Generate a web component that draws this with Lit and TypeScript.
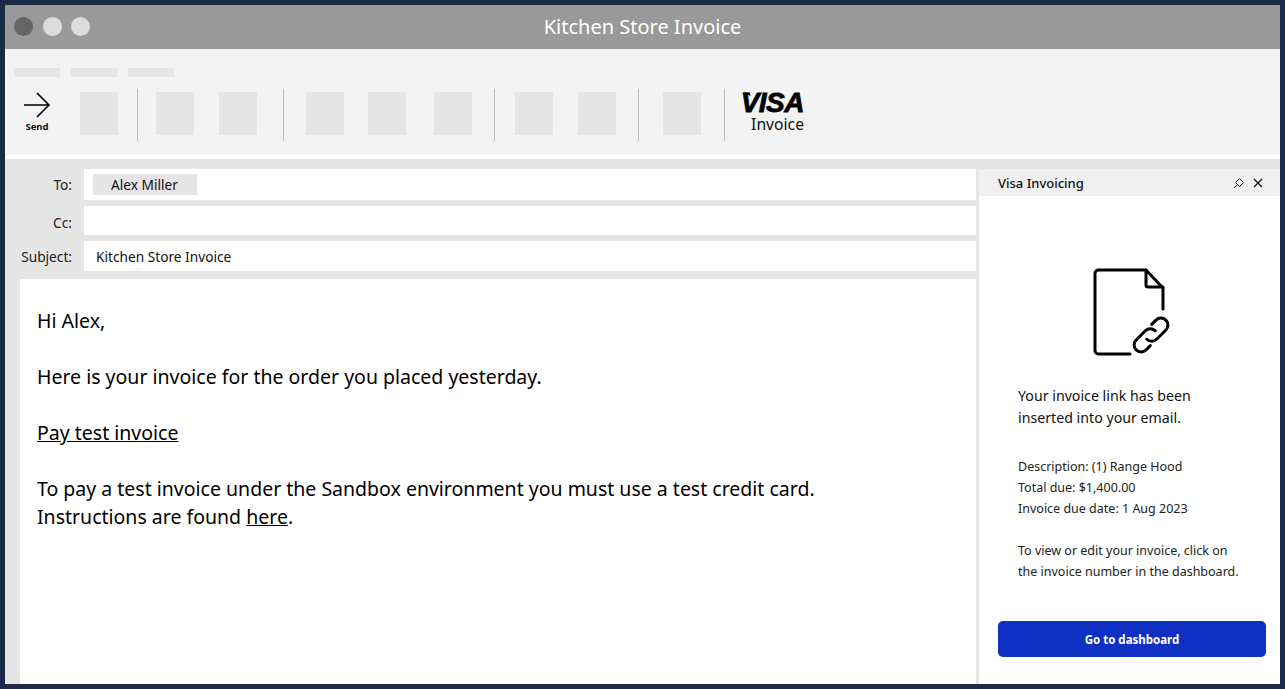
import {LitElement, css, html, svg} from 'lit';
import {customElement} from 'lit/decorators.js';

// left margin of each toolbar item, measured from the previous one
const TOOLBAR = [
  {kind: 'block', gap: 20},
  {kind: 'sep', gap: 19},
  {kind: 'block', gap: 18},
  {kind: 'block', gap: 25},
  {kind: 'sep', gap: 26},
  {kind: 'block', gap: 22},
  {kind: 'block', gap: 24},
  {kind: 'block', gap: 28},
  {kind: 'sep', gap: 22},
  {kind: 'block', gap: 20},
  {kind: 'block', gap: 25},
  {kind: 'sep', gap: 22},
  {kind: 'block', gap: 24},
  {kind: 'sep', gap: 23},
];

const docIcon = svg`
  <path d="M37 86H5.500a3.500 3.500 0 0 1-3.500-3.500V5.500A3.500 3.500 0 0 1 5.500 2H53l17 18v21" />
  <path d="M53 2v15a2 2 0 0 0 2 2h15" />
  <g transform="translate(58 67) rotate(-45)">
    <path d="M-8 7H-14a7 7 0 0 1 0-14H-1a7 7 0 0 1 7 7" />
    <path d="M8 -7H14a7 7 0 0 1 0 14H1a7 7 0 0 1-7-7" />
  </g>
`;

@customElement('app-root')
export class AppRoot extends LitElement {
  static override styles = css`
    :host {
      display: block;
      width: 1285px;
      height: 689px;
      box-sizing: border-box;
      padding: 5px;
      background: #1d2a47;
      font-family: 'Noto Sans', 'Open Sans', sans-serif;
      color: #111;
      overflow: hidden;
    }

    .window {
      display: flex;
      flex-direction: column;
      height: 100%;
      background: #fff;
    }

    .titlebar {
      position: relative;
      flex: none;
      display: flex;
      align-items: center;
      justify-content: center;
      box-sizing: border-box;
      height: 44px;
      padding-bottom: 2px;
      background: #999;
      color: #fff;
      font-size: 20px;
    }

    .lights {
      position: absolute;
      left: 9px;
      top: 12px;
      display: flex;
      gap: 9.5px;
    }

    .lights span {
      width: 19px;
      height: 19px;
      border-radius: 50%;
      background: #dcdcdc;
    }

    .lights span:first-child {
      background: #666;
    }

    .toolbar {
      flex: none;
      box-sizing: border-box;
      height: 106px;
      padding: 19px 0 0 9px;
      background: #f3f3f3;
    }

    .tabs {
      display: flex;
      gap: 11px;
    }

    .tabs span {
      width: 46px;
      height: 9px;
      background: #e5e5e5;
    }

    .tools {
      display: flex;
      align-items: flex-start;
      margin-top: 12px;
    }

    .send {
      display: flex;
      flex-direction: column;
      align-items: center;
      width: 46px;
      font-size: 9.5px;
      font-weight: 700;
      line-height: 12px;
    }

    .send svg {
      display: block;
      margin: 3px 0 3px;
    }

    .block {
      flex: none;
      width: 38px;
      height: 43px;
      margin-top: 3px;
      background: #e5e5e5;
    }

    .sep {
      flex: none;
      width: 1px;
      height: 52px;
      background: #bdbdbd;
    }

    .visa {
      display: flex;
      flex-direction: column;
      align-items: flex-end;
      margin-left: 17px;
    }

    .visa svg {
      display: block;
      overflow: visible;
    }

    .visa text {
      font-family: 'Liberation Sans', sans-serif;
      font-size: 28px;
      font-style: italic;
      font-weight: 700;
      letter-spacing: -0.5px;
      stroke: #000;
      stroke-width: 0.8;
    }

    .visa span {
      margin-top: 1px;
      font-size: 15.7px;
      line-height: 20px;
    }

    .content {
      flex: 1;
      display: flex;
      min-height: 0;
      margin-top: 4px;
      padding-left: 1px;
      background: #e5e5e5;
    }

    .composer {
      flex: none;
      display: flex;
      flex-direction: column;
      width: 970px;
      margin-right: 3px;
      padding-top: 10px;
      box-sizing: border-box;
    }

    .field {
      display: flex;
      margin-bottom: 6px;
      font-size: 13.7px;
    }

    .field label {
      flex: none;
      width: 66px;
      box-sizing: border-box;
      text-align: right;
      align-self: center;
      color: #222;
    }

    .field .value {
      flex: none;
      display: flex;
      align-items: center;
      box-sizing: border-box;
      width: 892px;
      height: 30px;
      margin-left: 12px;
      padding-left: 12px;
      background: #fff;
    }

    .field.to .value {
      height: 31px;
    }

    .field.cc .value {
      height: 29px;
    }

    .field.cc label {
      padding-top: 4px;
    }

    .chip {
      display: flex;
      align-items: center;
      box-sizing: border-box;
      width: 104px;
      height: 21px;
      margin-left: -3px;
      padding-left: 18px;
      background: #e5e5e5;
    }

    .message {
      flex: 1;
      margin: 2px 0 0 14px;
      padding: 28px 17px 0;
      background: #fff;
      font-size: 19.5px;
      line-height: 28px;
      color: #000;
    }

    .message p {
      margin: 0 0 28px;
    }

    .message a {
      color: inherit;
      text-decoration: underline;
    }

    .panel {
      flex: 1;
      display: flex;
      flex-direction: column;
      margin-top: 10px;
      background: #fff;
    }

    .panel-head {
      flex: none;
      display: flex;
      align-items: center;
      justify-content: space-between;
      box-sizing: border-box;
      height: 27px;
      padding: 0 17px 0 19px;
      background: #f0f0f0;
      font-size: 13px;
      font-weight: 500;
    }

    .panel-actions {
      display: flex;
      gap: 8px;
      align-items: center;
    }

    .panel-actions svg {
      display: block;
    }

    .doc {
      display: block;
      margin: 72px 0 0 114px;
      fill: none;
      stroke: #000;
      stroke-width: 3;
      stroke-linecap: round;
      stroke-linejoin: round;
    }

    .panel-body {
      flex: 1;
      display: flex;
      flex-direction: column;
      padding: 0 14px 27px 19px;
    }

    .lead {
      margin: 27px 0 0 20px;
      font-size: 14.2px;
      line-height: 22px;
    }

    .info {
      margin: 27px 0 0 20px;
      font-size: 12.5px;
      line-height: 21px;
      color: #222;
    }

    .info + .info {
      margin-top: 21px;
    }

    .button {
      display: flex;
      align-items: center;
      justify-content: center;
      box-sizing: border-box;
      height: 36px;
      margin-top: auto;
      padding-top: 1px;
      border-radius: 5px;
      background: #1030c4;
      color: #fff;
      font-size: 11.5px;
      font-weight: 700;
    }
  `;

  override render() {
    return html`
      <div class="window">
        <div class="titlebar">
          <div class="lights"><span></span><span></span><span></span></div>
          Kitchen Store Invoice
        </div>
        <div class="toolbar">
          <div class="tabs"><span></span><span></span><span></span></div>
          <div class="tools">
            <div class="send">
              <svg width="28" height="26" viewBox="0 0 28 26" fill="none" stroke="#000" stroke-width="1.600">
                <path d="M1 13H26M14 1 26 13 14 25" />
              </svg>
              Send
            </div>
            ${TOOLBAR.map(
              (item) =>
                html`<div class=${item.kind} style="margin-left:${item.gap}px"></div>`
            )}
            <div class="visa">
              <svg width="62" height="24" viewBox="0 0 62 24">
                <polygon points="1,3.500 8,3.500 8.500,7" fill="#000" />
                <text x="62" y="23" text-anchor="end">VISA</text>
              </svg>
              <span>Invoice</span>
            </div>
          </div>
        </div>
        <div class="content">
          <div class="composer">
            <div class="field to">
              <label>To:</label>
              <div class="value"><div class="chip">Alex Miller</div></div>
            </div>
            <div class="field cc">
              <label>Cc:</label>
              <div class="value"></div>
            </div>
            <div class="field">
              <label>Subject:</label>
              <div class="value">Kitchen Store Invoice</div>
            </div>
            <div class="message">
              <p>Hi Alex,</p>
              <p>Here is your invoice for the order you placed yesterday.</p>
              <p><a href="#">Pay test invoice</a></p>
              <p>
                To pay a test invoice under the Sandbox environment you must use a test credit card.<br />
                Instructions are found <a href="#">here</a>.
              </p>
            </div>
          </div>
          <div class="panel">
            <div class="panel-head">
              Visa Invoicing
              <div class="panel-actions">
                <svg width="12" height="12" viewBox="0 0 12 12" fill="none" stroke="#222" stroke-width="1">
                  <path d="M1 11 4.200 7.800M2.500 5.500 6.500 1.500l4 4-4 4z" />
                </svg>
                <svg width="10" height="10" viewBox="0 0 10 10" fill="none" stroke="#111" stroke-width="1.300">
                  <path d="M1 1 9 9M9 1 1 9" />
                </svg>
              </div>
            </div>
            <svg class="doc" width="80" height="90" viewBox="0 0 80 90">${docIcon}</svg>
            <div class="panel-body">
              <div class="lead">Your invoice link has been<br />inserted into your email.</div>
              <div class="info">
                Description: (1) Range Hood<br />
                Total due: $1,400.00<br />
                Invoice due date: 1 Aug 2023
              </div>
              <div class="info">
                To view or edit your invoice, click on<br />
                the invoice number in the dashboard.
              </div>
              <div class="button">Go to dashboard</div>
            </div>
          </div>
        </div>
      </div>
    `;
  }
}
